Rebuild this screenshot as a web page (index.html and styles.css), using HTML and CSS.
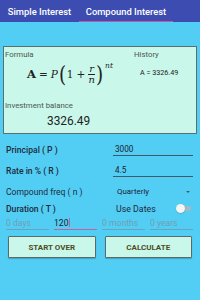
FILE: index.html
```html
<!DOCTYPE html>
<html>
<head>
<meta charset="utf-8">
<link rel="stylesheet" href="styles.css">
</head>
<body>
<div class="tabs">
  <div class="tab">Simple Interest</div>
  <div class="tab active">Compound Interest</div>
</div>
<div class="content">
  <div class="card">
    <div class="card-top">
      <div class="formula-col">
        <div class="label">Formula</div>
        <div class="formula">
          <span class="bold">A</span><span class="op">=</span><span class="it">P</span><span class="paren">(</span><span>1</span><span class="op">+</span><span class="frac"><span class="num it">r</span><span class="den it">n</span></span><span class="paren">)</span><sup class="it">nt</sup>
        </div>
      </div>
      <div class="history-col">
        <div class="label">History</div>
        <div class="hist">A = 3326.49</div>
      </div>
    </div>
    <div class="label ib">Investment balance</div>
    <div class="balance">3326.49</div>
  </div>

  <div class="form">
    <div class="row">
      <div class="lbl med">Principal ( P )</div>
      <div class="field"><span class="val">3000</span></div>
    </div>
    <div class="row">
      <div class="lbl med">Rate in % ( R )</div>
      <div class="field"><span class="val">4.5</span></div>
    </div>
    <div class="row">
      <div class="lbl">Compound freq ( n )</div>
      <div class="select"><span class="opt">Quarterly</span><span class="arrow"></span></div>
    </div>
    <div class="row dur">
      <div class="lbl med">Duration ( T )</div>
      <div class="usedates"><span class="ud">Use Dates</span><span class="switch"><span class="thumb"></span></span></div>
    </div>
    <div class="inputs">
      <div class="inp hint">0 days</div>
      <div class="inp focus">120<span class="cursor"></span></div>
      <div class="inp hint">0 months</div>
      <div class="inp hint">0 years</div>
    </div>
    <div class="buttons">
      <div class="btn">START OVER</div>
      <div class="btn">CALCULATE</div>
    </div>
  </div>
</div>
</body>
</html>
```
FILE: styles.css
```css
html, body {
  margin: 0;
  padding: 0;
}
body {
  width: 200px;
  height: 300px;
  background: #52cef5;
  font-family: Roboto, "Liberation Sans", sans-serif;
  overflow: hidden;
}
.tabs {
  height: 22px;
  background: #3d4cb0;
  display: flex;
  align-items: stretch;
}
.tab {
  color: #fff;
  font-size: 9.4px;
  font-weight: 500;
  display: flex;
  align-items: center;
  justify-content: center;
  box-sizing: border-box;
  white-space: nowrap;
}
.tab:first-child { width: 79px; }
.tab.active {
  width: 94px;
  border-bottom: 1px solid #c9589e;
  padding-top: 1px;
}
.content {
  padding: 24px 3px 0;
}
.card {
  background: #c9f8ea;
  border: 1px solid #5c6f6c;
  height: 88px;
  box-sizing: border-box;
  padding: 4px 1px 0;
}
.card-top {
  display: flex;
}
.formula-col { width: 129px; }
.history-col { flex: 1; }
.label {
  font-size: 7.8px;
  color: #4d5550;
  line-height: 8px;
  white-space: nowrap;
}
.formula {
  font-family: "DejaVu Serif", "Liberation Serif", serif;
  font-size: 10.5px;
  color: #222;
  display: flex;
  align-items: center;
  height: 30px;
  padding-left: 22px;
}
.bold { font-weight: bold; font-size: 11.5px; }
.it { font-style: italic; }
.op { margin: 0 3px; }
.paren {
  font-size: 23px;
  font-weight: 300;
  line-height: 22px;
  transform: scaleX(0.8);
  margin-bottom: 1px;
}
.frac {
  display: inline-flex;
  flex-direction: column;
  align-items: center;
  font-size: 10px;
  line-height: 10px;
}
.frac .num { border-bottom: 0.8px solid #222; padding: 0 1px; }
.formula sup {
  font-size: 7.5px;
  align-self: flex-start;
  margin-top: 2px;
  margin-left: 1px;
}
.hist {
  font-size: 7.2px;
  line-height: 9px;
  color: #222;
  margin-top: 9px;
  padding-left: 6px;
}
.label.ib { margin-top: 13px; }
.balance {
  font-size: 11.9px;
  line-height: 14px;
  color: #222;
  padding-left: 42px;
  margin-top: 4px;
}
.form {
  padding: 5px 3px 0 3px;
}
.row {
  display: flex;
  align-items: center;
  height: 21px;
}
.row.dur { height: 13px; }
.lbl {
  width: 107px;
  font-size: 8.6px;
  color: #1f2a3a;
  white-space: nowrap;
}
.lbl.med { font-weight: 500; }
.field {
  flex: 1;
  height: 12px;
  box-sizing: border-box;
  border-bottom: 1px solid #3e5a66;
  margin-right: 1px;
  display: flex;
  align-items: center;
}
.val {
  font-size: 8.2px;
  line-height: 11px;
  color: #1a2330;
  padding-left: 2px;
}
.select {
  flex: 1;
  display: flex;
  align-items: center;
  justify-content: space-between;
  padding: 0 4px 0 4px;
}
.opt { font-size: 7.9px; color: #1a2330; }
.arrow {
  width: 0;
  height: 0;
  border-left: 2px solid transparent;
  border-right: 2px solid transparent;
  border-top: 2px solid #4a5a66;
}
.usedates {
  flex: 1;
  display: flex;
  align-items: center;
  justify-content: space-between;
  padding-left: 3px;
  padding-right: 3px;
}
.ud { font-size: 8.8px; color: #1f2a3a; }
.switch {
  position: relative;
  width: 13px;
  height: 5px;
  border-radius: 3px;
  background: #a6b9c3;
}
.thumb {
  position: absolute;
  left: -2px;
  top: -2px;
  width: 9px;
  height: 9px;
  border-radius: 50%;
  background: #f4f6f6;
  box-shadow: 0 0.5px 1px rgba(0,0,0,0.25);
}
.inputs {
  display: flex;
  gap: 5px;
  padding: 3px 1px 0 0;
}
.inp {
  flex: 1;
  height: 11px;
  font-size: 8.6px;
  line-height: 11px;
  border-bottom: 1px solid #6aa3bd;
  white-space: nowrap;
}
.inp.hint { color: #6d9fb4; }
.inp.focus {
  color: #1a2330;
  border-bottom: 1px solid #c7609a;
}
.cursor {
  display: inline-block;
  width: 1px;
  height: 9px;
  background: #c7609a;
  vertical-align: -1px;
}
.buttons {
  display: flex;
  gap: 9px;
  padding: 6px 2px 0 2px;
}
.btn {
  flex: 1;
  height: 22px;
  box-sizing: border-box;
  background: #c9f8ea;
  border: 1px solid #5d6b68;
  border-radius: 1px;
  display: flex;
  align-items: center;
  justify-content: center;
  font-size: 8px;
  font-weight: bold;
  color: #4f4b1e;
  box-shadow: 0 1px 1px rgba(0,0,0,0.2);
}
```
